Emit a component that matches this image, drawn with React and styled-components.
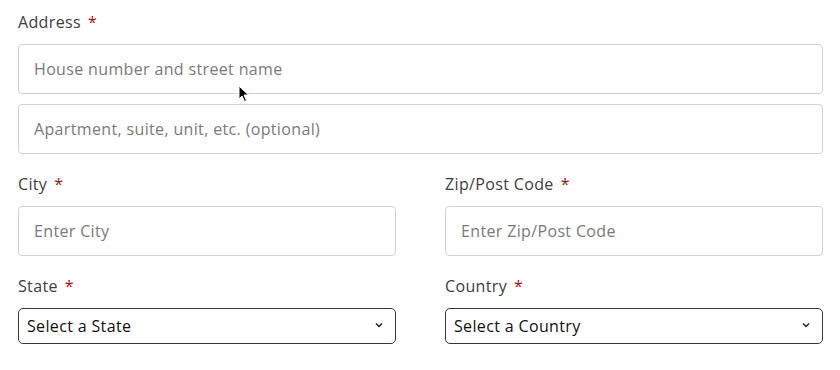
import React from 'react'
import styled, { createGlobalStyle } from 'styled-components'

const Global = createGlobalStyle`
  html, body {
    margin: 0;
    padding: 0;
    background: #fff;
  }
  body {
    font-family: "Open Sans", "Liberation Sans", sans-serif;
    color: #3a3a3a;
  }
`

const Form = styled.form`
  position: relative;
  padding: 12px 17px 0 18px;
  display: flex;
  flex-direction: column;
`

const Label = styled.label`
  display: block;
  font-size: 16px;
  letter-spacing: 0.35px;
  line-height: 20px;
  color: #3d3d3d;
  margin-bottom: 12px;
  span {
    color: #a30f0f;
    margin-left: 7px;
  }
`

const Input = styled.input`
  box-sizing: border-box;
  width: 100%;
  height: 50px;
  padding: 0 15px;
  border: 1px solid #d2d2d2;
  border-radius: 4px;
  background: #fff;
  font-family: inherit;
  font-size: 16px;
  letter-spacing: 0.35px;
  color: #333;
  margin-bottom: ${p => p.$gap || 0}px;
  &::placeholder {
    color: #7a7a7a;
  }
`

const Row = styled.div`
  display: grid;
  grid-template-columns: 1fr 1fr;
  column-gap: 49px;
  margin-top: ${p => p.$top}px;
`

const Field = styled.div`
  display: flex;
  flex-direction: column;
`

const SelectWrap = styled.div`
  position: relative;
  svg {
    position: absolute;
    right: 12px;
    top: 14px;
    pointer-events: none;
  }
`

const Select = styled.select`
  box-sizing: border-box;
  width: 100%;
  height: 36px;
  padding: 0 8px;
  border: 1px solid #3e3434;
  border-radius: 5px;
  background: #fff;
  appearance: none;
  font-family: inherit;
  font-size: 16px;
  letter-spacing: 0.35px;
  color: #111;
`

const Cursor = styled.svg`
  position: absolute;
  left: 238px;
  top: 85px;
`

const Chevron = () => (
  <svg width="10" height="7" viewBox="0 0 10 7">
    <path d="M2 1.5 L5 4.5 L8 1.5" fill="none" stroke="#222" strokeWidth="1.5" />
  </svg>
)

const Req = ({ children }) => (
  <Label>{children}<span>*</span></Label>
)

export default function App() {
  return (
    <>
      <Global />
      <Form>
        <Req>Address</Req>
        <Input placeholder="House number and street name" $gap={10} />
        <Input placeholder="Apartment, suite, unit, etc. (optional)" />
        <Row $top={20}>
          <Field>
            <Req>City</Req>
            <Input placeholder="Enter City" />
          </Field>
          <Field>
            <Req>Zip/Post Code</Req>
            <Input placeholder="Enter Zip/Post Code" />
          </Field>
        </Row>
        <Row $top={20}>
          <Field>
            <Req>State</Req>
            <SelectWrap>
              <Select defaultValue="">
                <option value="">Select a State</option>
              </Select>
              <Chevron />
            </SelectWrap>
          </Field>
          <Field>
            <Req>Country</Req>
            <SelectWrap>
              <Select defaultValue="">
                <option value="">Select a Country</option>
              </Select>
              <Chevron />
            </SelectWrap>
          </Field>
        </Row>
        <Cursor width="12" height="18" viewBox="0 0 12 18">
          <path d="M1 1 L1 14 L4 11 L6.5 16.5 L8.5 15.5 L6 10 L10.5 10 Z" fill="#000" stroke="#fff" strokeWidth="1" />
        </Cursor>
      </Form>
    </>
  )
}
